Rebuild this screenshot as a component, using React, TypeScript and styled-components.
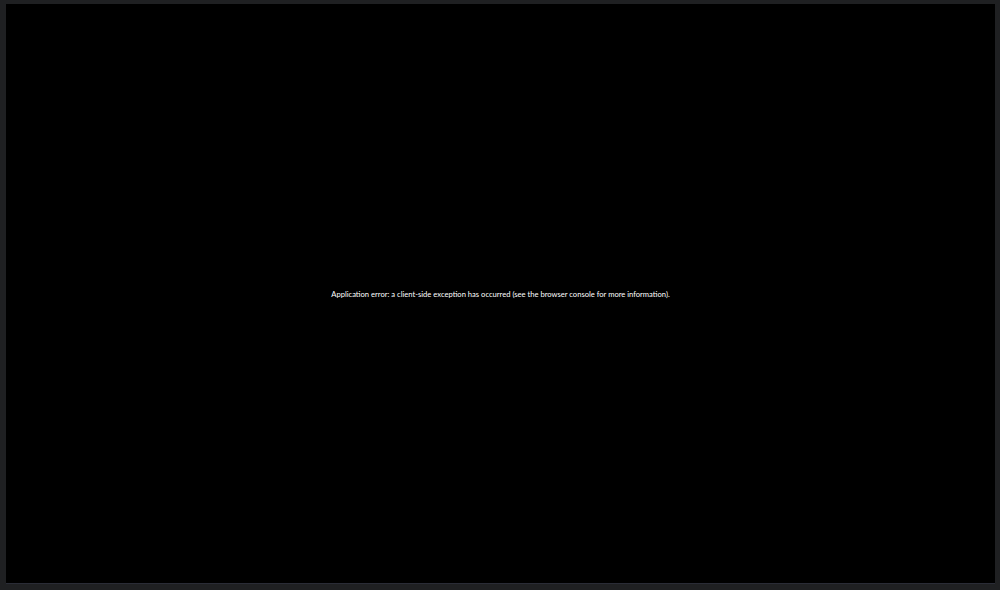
import React from "react";
import styled, { createGlobalStyle } from "styled-components";

const GlobalStyle = createGlobalStyle`
  html,
  body {
    margin: 0;
    padding: 0;
    background-color: #1f2022;
  }

  #root {
    height: 590px;
  }
`;

const Frame = styled.div`
  box-sizing: border-box;
  display: flex;
  height: 590px;
  padding: 4px 5px 6px 6px;
  width: 1000px;
`;

const Screen = styled.div`
  align-items: center;
  background-color: #000000;
  border-bottom: 1px solid #2a2c36;
  display: flex;
  flex: 1;
  justify-content: center;
`;

const ErrorText = styled.h2`
  color: #ffffff;
  font-family: Lato, "Open Sans", sans-serif;
  font-size: 7.6px;
  font-weight: 400;
  line-height: 10px;
  margin: 0;
`;

const App = () => {
  return (
    <>
      <GlobalStyle />
      <Frame>
        <Screen>
          <ErrorText>
            Application error: a client-side exception has occurred (see the
            browser console for more information).
          </ErrorText>
        </Screen>
      </Frame>
    </>
  );
};

export default App;
